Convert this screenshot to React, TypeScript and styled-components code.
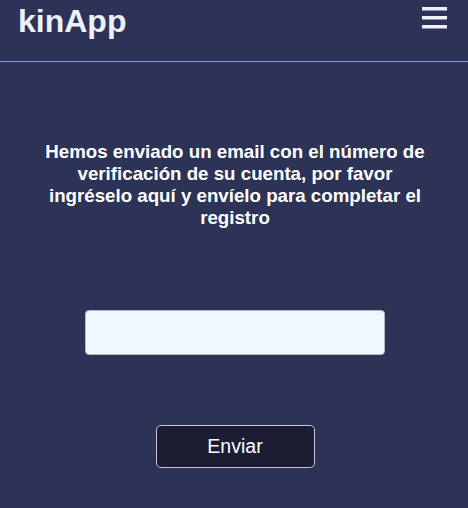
import styled, { createGlobalStyle } from 'styled-components';

const GlobalStyle = createGlobalStyle`
  html, body {
    margin: 0;
    padding: 0;
    background: #2c3356;
  }
  body {
    font-family: "Liberation Sans", Arial, sans-serif;
  }
`;

const Page = styled.div`
  min-height: 100vh;
  background: #2c3356;
  color: #ffffff;
  display: flex;
  flex-direction: column;
`;

const Header = styled.header`
  height: 62px;
  box-sizing: border-box;
  border-bottom: 1px solid #8d9ae6;
  display: flex;
  align-items: flex-start;
  justify-content: space-between;
  padding: 0 21px 0 18px;
`;

const Brand = styled.h1`
  margin: 3px 0 0;
  font-size: 32px;
  font-weight: 700;
  line-height: 37px;
  color: #eef0fa;
`;

const MenuButton = styled.button`
  margin-top: 7px;
  padding: 0;
  border: none;
  background: transparent;
  cursor: pointer;
  display: block;
`;

const Main = styled.main`
  display: flex;
  flex-direction: column;
  align-items: center;
  padding: 79px 20px 0 22px;
`;

const Message = styled.h3`
  margin: 0;
  max-width: 386px;
  text-align: center;
  font-size: 18.72px;
  font-weight: 700;
  line-height: 22px;
  color: #ffffff;
`;

const CodeInput = styled.input`
  margin-top: 81px;
  width: 300px;
  height: 45px;
  box-sizing: border-box;
  background: #f0f7ff;
  border: 1px solid #b5b8c4;
  border-radius: 4px;
  font-size: 18px;
  padding: 0 10px;
  outline: none;
`;

const SubmitButton = styled.button`
  margin-top: 70px;
  width: 159px;
  height: 43px;
  background: #1c1d33;
  color: #ffffff;
  border: 1px solid #c4c6d2;
  border-radius: 5px;
  font-family: "Liberation Sans", Arial, sans-serif;
  font-size: 19.5px;
  cursor: pointer;
`;

function MenuIcon() {
  return (
    <svg width="25" height="22" viewBox="0 0 25 22" aria-hidden="true">
      <rect x="0" y="0" width="25" height="3.5" fill="#eef0fa" />
      <rect x="0" y="9" width="25" height="3.5" fill="#eef0fa" />
      <rect x="0" y="18" width="25" height="3.5" fill="#eef0fa" />
    </svg>
  );
}

export default function App() {
  return (
    <>
      <GlobalStyle />
      <Page>
        <Header>
          <Brand>kinApp</Brand>
          <MenuButton aria-label="Menú">
            <MenuIcon />
          </MenuButton>
        </Header>
        <Main>
          <Message>
            Hemos enviado un email con el número de verificación de su cuenta, por favor
            ingréselo aquí y envíelo para completar el registro
          </Message>
          <CodeInput type="text" />
          <SubmitButton>Enviar</SubmitButton>
        </Main>
      </Page>
    </>
  );
}
